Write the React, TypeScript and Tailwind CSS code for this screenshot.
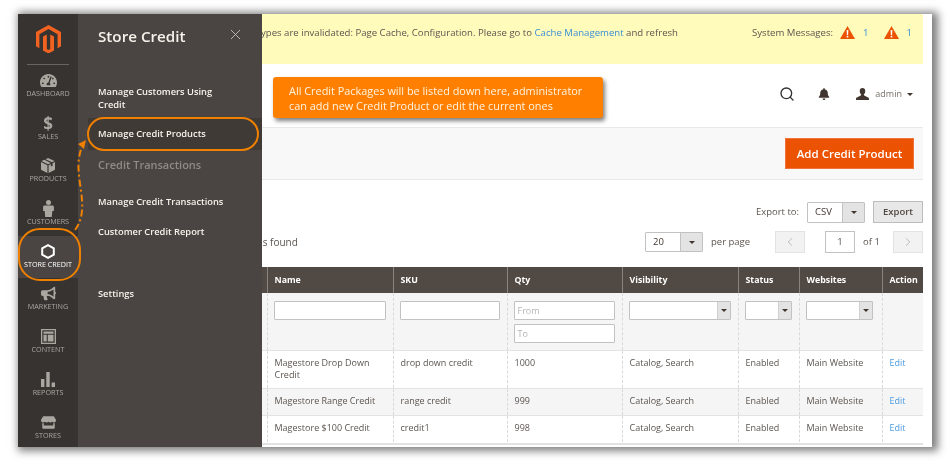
import { ReactNode } from "react";
import { FaBell, FaBullhorn, FaStore, FaTachometerAlt } from "react-icons/fa";
import { LuChevronLeft, LuChevronRight, LuSearch, LuX } from "react-icons/lu";

function MagentoLogo() {
  return (
    <svg width="25" height="28" viewBox="0 0 25 28">
      <path
        fill="#f26322"
        d="M12.500 0 0 7v14.200l3.400 2V9.200l9.100-5.200 9.100 5.200v14l3.400-2V7zM14.200 9.500v14.600l-1.700 1-1.700-1V9.500L7 11.600v13.800L12.500 28.500l5.500-3.100V11.600z"
      />
    </svg>
  );
}

function BoxIcon() {
  return (
    <svg width="14" height="15" viewBox="0 0 14 15" fill="currentColor">
      <path d="M7 0 13.500 3 11 4.300 4.600 1.200zM3.400 1.800 9.700 5 7 6.300.5 3zM0 4l6.400 3.200V15L0 11.800zM14 4v7.800L7.600 15V7.200L9.800 6v2.600l1.800-.9V5.200z" />
    </svg>
  );
}

function PersonIcon() {
  return (
    <svg width="11" height="17" viewBox="0 0 11 17" fill="currentColor">
      <circle cx="5.500" cy="2.600" r="2.500" />
      <path d="M1.600 5.600h7.800c.9 0 1.500.6 1.500 1.500v3.900H9.300l-.5 6H2.200l-.5-6H.1V7.100c0-.9.6-1.500 1.500-1.500z" />
    </svg>
  );
}

function HexIcon() {
  return (
    <svg width="14" height="15" viewBox="0 0 14 15" fill="none" stroke="currentColor" strokeWidth="2">
      <path d="M7 1.200 12.800 4.300v6.400L7 13.800 1.200 10.700V4.300z" />
    </svg>
  );
}

function LayoutIcon() {
  return (
    <svg width="15" height="15" viewBox="0 0 15 15" fill="currentColor">
      <path d="M0 0h15v15H0zM1.300 1.300v12.400h12.400V1.300zM2.500 2.500h10v2.200h-10zM2.500 5.800h3.200v6.700H2.500zM6.800 5.800h5.700v6.700H6.800z" fillRule="evenodd" />
    </svg>
  );
}

function BarsIcon() {
  return (
    <svg width="14" height="15" viewBox="0 0 14 15" fill="currentColor">
      <path d="M0 7h3.400v8H0zM5.300 0h3.400v15H5.300zM10.600 10.500H14V15h-3.400z" />
    </svg>
  );
}

function WarnIcon() {
  return (
    <svg width="15" height="13" viewBox="0 0 15 13">
      <path fill="#eb5202" d="M7.500 0 15 13H0z" />
      <path fill="#fff" d="M6.600 4h1.800l-.3 5H6.900zM6.700 9.800h1.600v1.600H6.700z" />
    </svg>
  );
}

function UserIcon() {
  return (
    <svg width="13" height="12" viewBox="0 0 14 13" fill="#41362f">
      <path d="M7 0c1.900 0 3 1.300 3 3.200 0 1.500-.6 2.900-1.400 3.600-.3.300-.2 1 .3 1.300L13.600 10.500c.3.200.4.400.4.700V13H0v-1.800c0-.3.100-.5.400-.7L5.100 8.100c.5-.3.600-1 .3-1.300C4.600 6.100 4 4.700 4 3.200 4 1.300 5.100 0 7 0z" />
    </svg>
  );
}

function Caret() {
  return <span className="inline-block h-0 w-0 border-x-[3px] border-t-[3.500px] border-x-transparent border-t-[#41362f]" />;
}

const navItems: { label: string; icon: ReactNode; active?: boolean }[] = [
  { label: "Dashboard", icon: <FaTachometerAlt size={17} /> },
  { label: "Sales", icon: <span className="text-[17px] leading-[17px] font-bold">$</span> },
  { label: "Products", icon: <BoxIcon /> },
  { label: "Customers", icon: <PersonIcon /> },
  { label: "Store Credit", icon: <HexIcon />, active: true },
  { label: "Marketing", icon: <FaBullhorn size={15} /> },
  { label: "Content", icon: <LayoutIcon /> },
  { label: "Reports", icon: <BarsIcon /> },
  { label: "Stores", icon: <FaStore size={15} /> },
];

function Sidebar() {
  return (
    <aside className="flex w-[60px] shrink-0 flex-col bg-[#373330]">
      <div className="flex h-[50px] shrink-0 items-center justify-center">
        <MagentoLogo />
      </div>
      <div className="mx-[9px] h-px shrink-0 bg-[#6b6561]" />
      <div className="shrink-0">
        {navItems.map((item) => (
          <div
            key={item.label}
            className={`flex h-[42.700px] flex-col items-center pt-[7px] ${
              item.active ? "bg-[#4a4542] text-white" : "text-[#aaa6a0]"
            }`}
          >
            <div className="flex h-[17px] items-center">{item.icon}</div>
            <span className="text-[7.200px] leading-[9px] whitespace-nowrap uppercase">{item.label}</span>
          </div>
        ))}
      </div>
    </aside>
  );
}

function SubLink({ children, className = "" }: { children: ReactNode; className?: string }) {
  return <div className={`px-[20px] text-[9.300px] leading-[13px] font-semibold text-[#f7f3eb] ${className}`}>{children}</div>;
}

function Panel() {
  return (
    <nav className="w-[184px] shrink-0 bg-[#4a4542]">
      <div className="flex h-[34px] items-end justify-between pr-[18px] pl-[20px]">
        <span className="text-[15.200px] leading-[24px] font-semibold text-[#f7f3eb]">Store Credit</span>
        <LuX size={17} strokeWidth={1.300} className="mb-[5px] text-[#c5c0bb]" />
      </div>
      <SubLink className="mt-[37px]">
        Manage Customers Using
        <br />
        Credit
      </SubLink>
      <div className="mt-[7px] ml-[10px] flex h-[32px] items-center bg-[#403a36] px-[10px] text-[9.300px] font-semibold text-[#f7f3eb]">
        Manage Credit Products
      </div>
      <div className="mt-[7px] px-[20px] text-[11px] leading-[16px] font-semibold text-[#8f8a85]">Credit Transactions</div>
      <SubLink className="mt-[22px]">Manage Credit Transactions</SubLink>
      <SubLink className="mt-[17px]">Customer Credit Report</SubLink>
      <SubLink className="mt-[49px]">Settings</SubLink>
    </nav>
  );
}

function SelectBox({ w, value, height = "h-[20px]" }: { w: string; value?: string; height?: string }) {
  return (
    <div className={`flex ${w} ${height} shrink-0 overflow-hidden rounded-[1px] border border-[#c2c2c2] bg-white`}>
      <div className="flex flex-1 items-center pl-[7px] text-[9.500px] text-[#41362f]">{value}</div>
      <div className="flex w-[22px] items-center justify-center border-l border-[#c2c2c2] bg-[#e3e3e3]">
        <Caret />
      </div>
    </div>
  );
}

function FilterSelect({ w }: { w: string }) {
  return (
    <div className={`flex ${w} h-[19px] overflow-hidden rounded-[1px] border border-[#c2c2c2] bg-white`}>
      <div className="flex-1" />
      <div className="flex w-[13px] items-center justify-center border-l border-[#d0d0d0] bg-[#e3e3e3]">
        <Caret />
      </div>
    </div>
  );
}

function TextInput({ placeholder }: { placeholder?: string }) {
  return (
    <div className="flex h-[19px] w-full items-center rounded-[1px] border border-[#c2c2c2] bg-white pl-[3px] text-[9px] text-[#b5b5b5]">
      {placeholder}
    </div>
  );
}

const columns = ["", "Name", "SKU", "Qty", "Visibility", "Status", "Websites", "Action"];
const colWidths = ["w-[5px]", "w-[126px]", "w-[114px]", "w-[115px]", "w-[116px]", "w-[61px]", "w-[83px]", "w-[41px]"];

const products = [
  { name: "Magestore Drop Down Credit", sku: "drop down credit", qty: "1000" },
  { name: "Magestore Range Credit", sku: "range credit", qty: "999" },
  { name: "Magestore $100 Credit", sku: "credit1", qty: "998" },
];

const cell = "border-l border-dashed border-[#d9d9d9] px-[7px] pt-[6.500px] align-top text-[9px] leading-[12px]";
const filterCell = "border-l border-dashed border-[#d9d9d9] pt-[8px] pr-[7px] pl-[6px] align-top";

function Grid() {
  return (
    <table className="w-[661px] table-fixed border-collapse">
      <colgroup>
        {colWidths.map((w, i) => (
          <col key={i} className={w} />
        ))}
      </colgroup>
      <thead>
        <tr className="h-[26px] bg-[#514943]">
          {columns.map((c, i) => (
            <th key={i} className="border-l border-[#8a837f] px-[7px] pt-px text-left text-[8.800px] font-bold text-white first:border-l-0">
              {c}
            </th>
          ))}
        </tr>
        <tr className="h-[57px] bg-[#f5f5f5]">
          <td />
          <td className={filterCell}>
            <TextInput />
          </td>
          <td className={filterCell}>
            <TextInput />
          </td>
          <td className={filterCell}>
            <div className="flex flex-col gap-[4px]">
              <TextInput placeholder="From" />
              <TextInput placeholder="To" />
            </div>
          </td>
          <td className={filterCell}>
            <FilterSelect w="w-[102px]" />
          </td>
          <td className={filterCell}>
            <FilterSelect w="w-[47px]" />
          </td>
          <td className={filterCell}>
            <FilterSelect w="w-[67px]" />
          </td>
          <td className={filterCell} />
        </tr>
      </thead>
      <tbody>
        {products.map((p, i) => (
          <tr key={p.sku} className={`border-t border-[#e3e3e3] ${i === 0 ? "h-[38px]" : "h-[27px]"} ${i === 1 ? "bg-[#f5f5f5]" : "bg-white"} text-[#5c5550]`}>
            <td />
            <td className={cell}>{p.name}</td>
            <td className={cell}>{p.sku}</td>
            <td className={cell}>{p.qty}</td>
            <td className={cell}>Catalog, Search</td>
            <td className={cell}>Enabled</td>
            <td className={cell}>Main Website</td>
            <td className={`${cell} text-[#4a9be0]`}>Edit</td>
          </tr>
        ))}
      </tbody>
    </table>
  );
}

function Main() {
  return (
    <main className="flex w-[670px] shrink-0 flex-col overflow-hidden bg-white pr-[9px]">
      <div className="flex h-[50px] bg-[#fffbbb] pt-[12px] text-[9.600px] leading-[13px] text-[#5c5550]">
        {/* start of the message sits under the nav panel */}
        <div className="flex w-[416px] shrink-0 justify-end overflow-hidden whitespace-nowrap">
          <span>
            Types are invalidated: Page Cache, Configuration. Please go to{" "}
            <span className="text-[#3a8fd6]">Cache Management</span> and refresh
          </span>
        </div>
        <div className="ml-[74px] flex items-start">
          <span>System Messages:</span>
          <span className="ml-[7px] flex items-center gap-[8px] text-[#3a8fd6]">
            <WarnIcon /> 1
          </span>
          <span className="ml-[15px] flex items-center gap-[8px] text-[#3a8fd6]">
            <WarnIcon /> 1
          </span>
        </div>
      </div>

      <header className="flex h-[63px] items-center justify-end pr-[10px] pb-[3px]">
        <LuSearch size={16} strokeWidth={2} className="text-[#303030]" />
        <FaBell size={12} className="ml-[23px] text-[#41362f]" />
        <span className="ml-[26px] flex">
          <UserIcon />
        </span>
        <span className="ml-[6px] text-[9px] text-[#77706a]">admin</span>
        <span className="ml-[5px] flex">
          <Caret />
        </span>
      </header>

      <div className="flex h-[53px] items-center justify-end border-y border-[#e8e8e8] bg-[#f8f8f8] pr-[9px]">
        <button className="h-[31px] w-[129px] border border-[#f0743a] bg-[#eb5202] text-[11.500px] font-semibold text-white">
          Add Credit Product
        </button>
      </div>

      <div className="mt-[21px] flex h-[22px] items-center justify-end text-[9.500px] text-[#5c5550]">
        <span>Export to:</span>
        <SelectBox w="w-[58px] ml-[8px]" value="CSV" height="h-[21px]" />
        <button className="ml-[8px] h-[22px] w-[50px] border border-[#bdbdbd] bg-[#e8e8e8] text-[9.500px] font-semibold text-[#514943]">
          Export
        </button>
      </div>

      <div className="mt-[8px] flex h-[22px] items-center text-[9.500px] text-[#5c5550]">
        <span className="ml-[-30px] w-[413px] text-[10px] whitespace-nowrap">records found</span>
        <SelectBox w="w-[58px]" value="20" />
        <span className="ml-[8px] w-[40px] whitespace-nowrap">per page</span>
        <button className="ml-[24px] flex h-[22px] w-[30px] items-center justify-center border border-[#e3e3e3] bg-[#f2f2f2] text-[#a8a8a8]">
          <LuChevronLeft size={14} strokeWidth={1.300} />
        </button>
        <div className="ml-[20px] flex h-[22px] w-[30px] items-center justify-center border border-[#c2c2c2] bg-white">1</div>
        <span className="ml-[8px] w-[16px] whitespace-nowrap">of 1</span>
        <button className="ml-[14px] flex h-[22px] w-[30px] items-center justify-center border border-[#e3e3e3] bg-[#f2f2f2] text-[#a8a8a8]">
          <LuChevronRight size={14} strokeWidth={1.300} />
        </button>
      </div>

      <div className="mt-[14px]">
        <Grid />
      </div>
      <div className="mt-px h-[2px] w-[661px] bg-[#e3e3e3]" />
    </main>
  );
}

function Annotations() {
  return (
    <>
      <div className="absolute top-[77px] left-[273px] flex h-[41px] w-[330px] items-center rounded-[3px] bg-[#ff8000] pl-[16px] text-[10.900px] leading-[15px] text-[#fff3e2] shadow-[2px_3px_4px_rgba(0,0,0,0.5)]">
        <p>
          All Credit Packages will be listed down here, administrator
          <br />
          can add new Credit Product or edit the current ones
        </p>
      </div>
      <div className="absolute top-[117px] left-[87px] h-[34px] w-[172px] rounded-[17px] border-2 border-[#f08000]" />
      <div className="absolute top-[228px] left-[18px] h-[53px] w-[63px] rounded-[22px] border-2 border-[#f08000]" />
      <svg className="absolute top-0 left-0" width="100" height="240" viewBox="0 0 100 240" fill="none">
        <path
          d="M75 230C81 222 83 212 82 200C81 186 77 172 79 158C80 152 81 149 82 147"
          stroke="#f08000"
          strokeWidth="2"
          strokeDasharray="7 3 2 3"
        />
        <path d="M86 140 78 144 84 149z" fill="#f08000" />
      </svg>
    </>
  );
}

export default function App() {
  return (
    <div className="relative h-[461px] w-[952px] overflow-hidden bg-white pt-[14px] pl-[18px] font-['Open_Sans',sans-serif] blur-[0.35px]">
      <div className="flex h-[433px] w-[914px] overflow-hidden shadow-[3px_1px_8px_3px_rgba(0,0,0,0.5)]">
        <Sidebar />
        <Panel />
        <Main />
      </div>
      <Annotations />
    </div>
  );
}
